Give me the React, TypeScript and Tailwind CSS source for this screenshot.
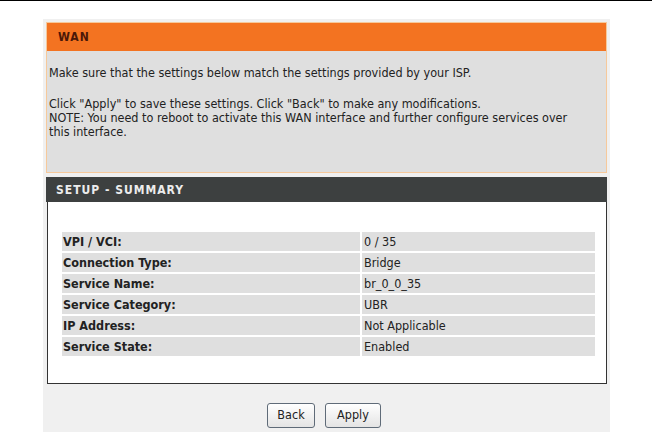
const rows: [string, string][] = [
  ['VPI / VCI:', '0 / 35'],
  ['Connection Type:', 'Bridge'],
  ['Service Name:', 'br_0_0_35'],
  ['Service Category:', 'UBR'],
  ['IP Address:', 'Not Applicable'],
  ['Service State:', 'Enabled'],
]

const tahoma = { fontFamily: '"DejaVu Sans Condensed", "DejaVu Sans", "Liberation Sans", sans-serif', fontStretch: 'condensed' }
const verdana = { fontFamily: '"DejaVu Sans", Verdana, sans-serif' }

export default function App() {
  return (
    <div className="h-[432px] overflow-hidden bg-white border-t border-black text-[12.5px] text-[#222]" style={tahoma}>
      <div className="ml-[43px] mt-[18px] w-[567px] h-[413px] bg-[#f0f0f0] pt-[3px] px-[3px]">
        <div className="border border-[#f6c99b]">
          <div className="h-[28px] bg-[#f37321] flex items-center pl-[11px] text-[12px] font-bold tracking-[1px] text-[#4a1808]" style={verdana}>
            WAN
          </div>
          <div className="h-[121px] bg-[#dfdfdf] px-[2px] pt-[15px] leading-[14px]">
            <p>Make sure that the settings below match the settings provided by your ISP.</p>
            <p className="mt-[17px]">Click "Apply" to save these settings. Click "Back" to make any modifications.</p>
            <p>
              NOTE: You need to reboot to activate this WAN interface and further configure services over
              <br />
              this interface.
            </p>
          </div>
        </div>
        <div className="mt-[4px] h-[25px] bg-[#3d4040] flex items-center pl-[10px] text-[12px] font-bold tracking-[1px] text-[#ececec]" style={verdana}>
          SETUP - SUMMARY
        </div>
        <div className="ml-[1px] h-[182px] bg-white border border-[#333] border-t-0 pt-[28px] px-[12px]">
          <table className="w-[537px] border-separate border-spacing-[2px]">
            <tbody>
              {rows.map(([k, v]) => (
                <tr key={k} className="h-[19px]">
                  <td className="w-[298px] bg-[#dfdfdf] pl-[1px] font-bold leading-[19px]">{k}</td>
                  <td className="bg-[#dfdfdf] pl-[2px] leading-[19px]">{v}</td>
                </tr>
              ))}
            </tbody>
          </table>
        </div>
        <div className="flex justify-center gap-[10px] pt-[19px] pr-[5px]">
          <button className="h-[25px] w-[48px] rounded-[3px] border border-[#5f6b78] bg-gradient-to-b from-white to-[#e4e4e4]">
            Back
          </button>
          <button className="h-[25px] w-[56px] rounded-[3px] border border-[#5f6b78] bg-gradient-to-b from-white to-[#e4e4e4]">
            Apply
          </button>
        </div>
      </div>
    </div>
  )
}
